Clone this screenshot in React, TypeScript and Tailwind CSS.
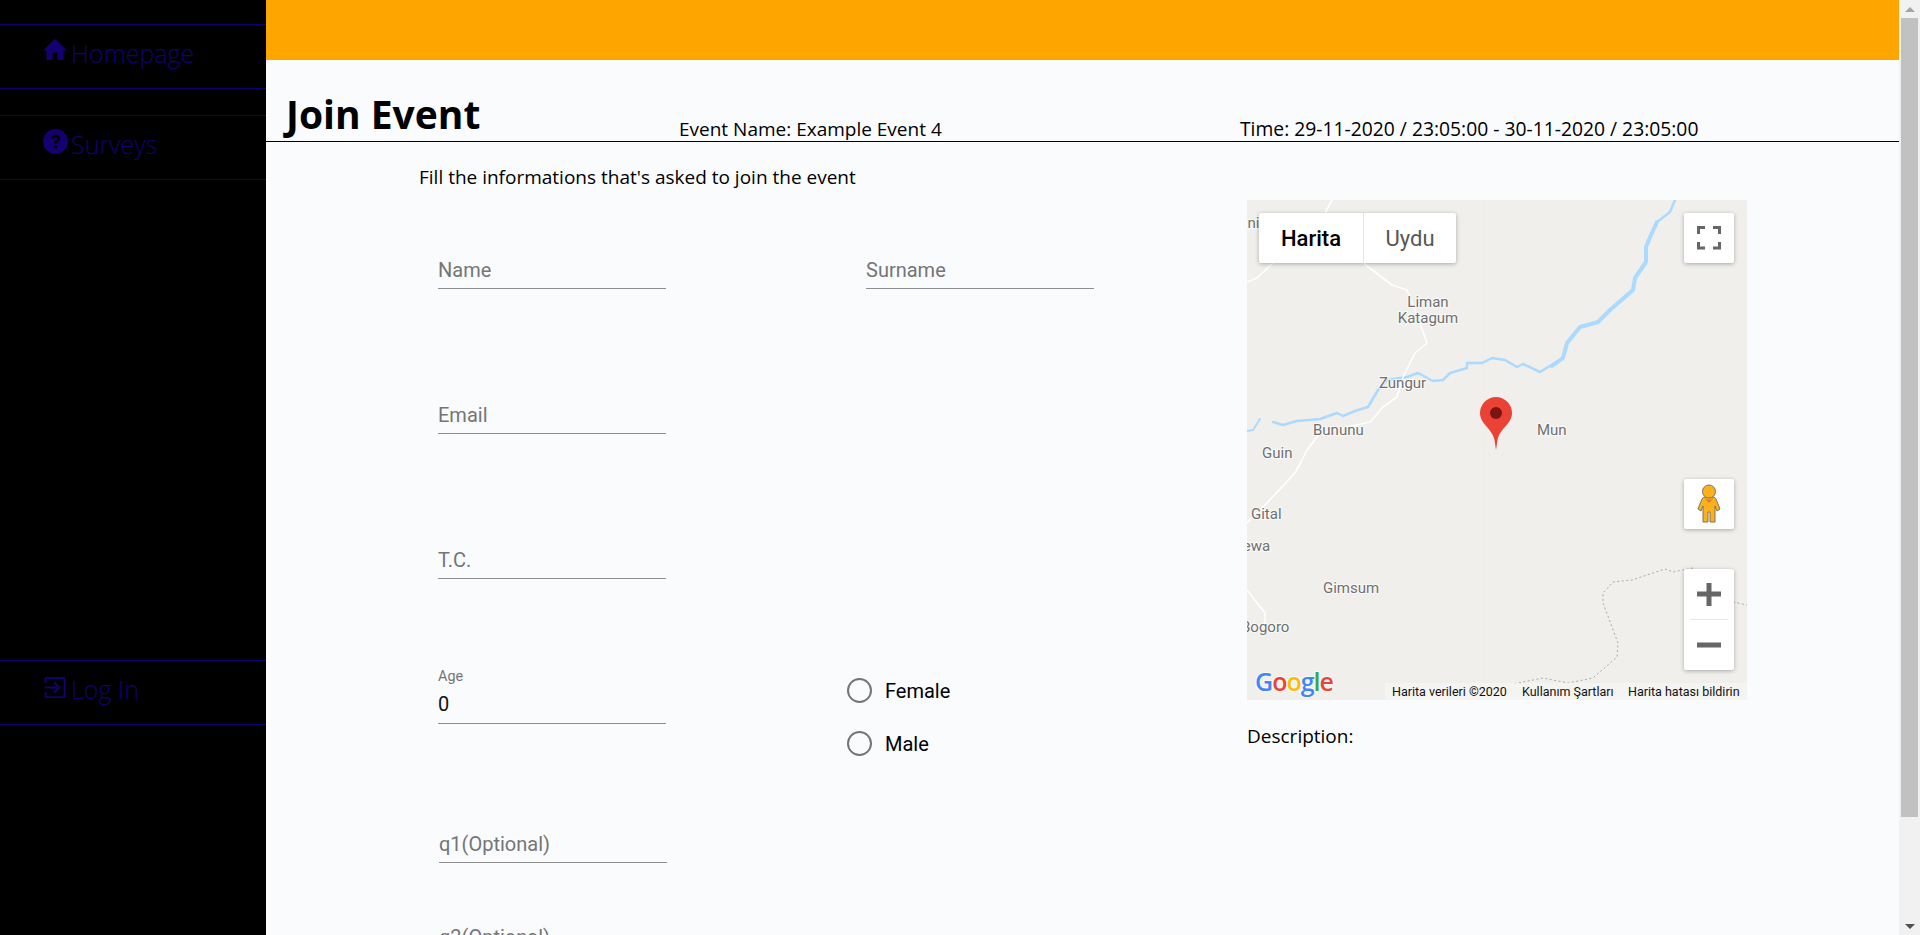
const uiFont = "font-['Open_Sans','Noto_Sans',sans-serif]";

function HomeIcon() {
  return (
    <svg width="24" height="21" viewBox="0 0 24 21" className="mt-[3px]">
      <path d="M12 0 L24 11.500 L20.500 11.500 L20.500 21 L14.500 21 L14.500 13.500 L9.500 13.500 L9.500 21 L3.500 21 L3.500 11.500 L0 11.500 Z" fill="#140070" />
    </svg>
  );
}

function QuestionIcon() {
  return (
    <svg width="25" height="25" viewBox="0 0 26 26" className="mt-[2px]">
      <circle cx="13" cy="13" r="13" fill="#140070" />
      <path d="M8.6 10.2 C8.8 7.4 10.6 5.8 13.3 5.8 C16 5.8 17.8 7.4 17.8 9.7 C17.8 12.6 14.6 12.8 14.6 15.2 L11.6 15.2 C11.6 11.6 14.6 11.4 14.6 9.8 C14.6 9 14.1 8.5 13.2 8.5 C12.2 8.5 11.7 9.2 11.6 10.2 Z" fill="#000" />
      <rect x="11.5" y="16.8" width="3.1" height="3.1" fill="#000" />
    </svg>
  );
}

function LogInIcon() {
  return (
    <svg width="24" height="23" viewBox="0 0 24 24" fill="none" stroke="#140070" strokeWidth="2" className="mt-[4px]">
      <path d="M2 7 V3 Q2 2 3 2 H21 Q22 2 22 3 V21 Q22 22 21 22 H3 Q2 22 2 21 V17" />
      <path d="M1 12 H16 M11 6.5 L16.5 12 L11 17.5" />
    </svg>
  );
}

function NavItem({ icon, label, className }: { icon: React.ReactNode; label: string; className?: string }) {
  return (
    <div className={`h-[65px] border-y border-[#140070] flex items-start pl-[43px] pt-[11px] text-[25px] leading-[34px] font-light text-[#140070] ${className ?? ""}`}>
      <div className="w-[28px] shrink-0">{icon}</div>
      <span>{label}</span>
    </div>
  );
}

function Field({ label, shift }: { label: string; shift?: boolean }) {
  return (
    <div className={`w-[228px] border-b border-[#8f8f8f] pb-[6px] pt-[4px] font-['Roboto',sans-serif] text-[20px] leading-[24px] text-[#757575] ${shift ? "ml-px" : ""}`}>
      {label}
    </div>
  );
}

function Radio({ label }: { label: string }) {
  return (
    <div className="flex items-center gap-[13px] h-[25px] font-['Roboto',sans-serif] text-[20px] text-black">
      <span className="w-[25px] h-[25px] rounded-full border-2 border-[#757575]" />
      {label}
    </div>
  );
}

function MapCanvas() {
  const river =
    "M428 0 L423 12 L410 22 L404 35 L399 47 L399 62 L388 78 L386 90 L363 110 L351 122 L333 127 L320 143 L316 158 L293 172 L276 164 L270 167 L258 160 L245 158 L235 163 L220 163 L220 168 L203 173 L196 180 L186 181 L171 173 L160 177 L140 180 L131 190 L121 207 L108 211 L96 216 L90 213 L73 219 L50 221 L36 225 L26 222";
  const riverWide = "M410 22 L404 35 L399 47 L399 62 L388 78 L386 90 L363 110 L351 122 L333 127 L320 143 L316 158 L305 166";
  const road =
    "M116 63 L145 85 L160 90 L173 123 L180 143 L168 153 L156 177 L150 197 L136 207 L123 222 L73 233 L60 250 L55 260 L48 273 L20 303 L0 323";
  const border =
    "M446 368 L426 372 L418 369 L385 380 L366 382 L356 393 L356 403 L371 443 L370 457 L346 478 L321 483 L296 478 L266 484";
  const labelClass = "font-['Roboto',sans-serif] text-[15px] fill-[#6f6f6f] [paint-order:stroke] stroke-white/70 [stroke-width:2px]";
  return (
    <svg width="500" height="500" viewBox="0 0 500 500" className="absolute inset-0">
      <rect width="500" height="500" fill="#f0efeb" />
      <path d="M237 0 V500 M0 240 H500" stroke="#eeede8" />
      <g fill="none" stroke="#aadaff" strokeLinejoin="round" strokeLinecap="round">
        <path d={river} strokeWidth="2.5" />
        <path d={riverWide} strokeWidth="4" />
        <path d="M13 219 L6 230 L0 231" strokeWidth="2" />
      </g>
      <g fill="none" stroke="#fff" strokeWidth="1.6" strokeLinejoin="round">
        <path d={road} />
        <path d="M85 0 L78 13 M26 63 L10 78 L0 82 M0 390 L18 413 L18 425" />
      </g>
      <path d={border} fill="none" stroke="#a9a9a5" strokeWidth="1" strokeDasharray="2 2.5" />
      <path d="M486 402 L500 405" fill="none" stroke="#a9a9a5" strokeWidth="1" strokeDasharray="2 2.5" />
      <text x="-16" y="28" className={labelClass}>Jani</text>
      <text x="181" y="107" textAnchor="middle" className={labelClass}>Liman</text>
      <text x="181" y="123" textAnchor="middle" className={labelClass}>Katagum</text>
      <text x="132" y="188" className={labelClass}>Zungur</text>
      <text x="66" y="235" className={labelClass}>Bununu</text>
      <text x="290" y="235" className={labelClass}>Mun</text>
      <text x="15" y="258" className={labelClass}>Guin</text>
      <text x="4" y="319" className={labelClass}>Gital</text>
      <text x="-13" y="351" className={labelClass}>Zewa</text>
      <text x="76" y="393" className={labelClass}>Gimsum</text>
      <text x="-6" y="432" className={labelClass}>Bogoro</text>
      {/* marker */}
      <path d="M249 250 L247.500 240 C245 228 233 224 233 213 A16 16 0 0 1 265 213 C265 224 253 228 250.500 240 Z" fill="#ea4335" />
      <circle cx="249" cy="213" r="6" fill="#7d1410" />
      {/* google */}
      <text x="8" y="491" className="font-['Open_Sans',sans-serif] text-[25px] font-semibold tracking-[-1px] [paint-order:stroke] stroke-white/70 [stroke-width:2px]">
        <tspan fill="#4285f4">G</tspan>
        <tspan fill="#ea4335">o</tspan>
        <tspan fill="#fbbc05">o</tspan>
        <tspan fill="#4285f4">g</tspan>
        <tspan fill="#34a853">l</tspan>
        <tspan fill="#ea4335">e</tspan>
      </text>
    </svg>
  );
}

function Pegman() {
  return (
    <svg width="24" height="40" viewBox="0 0 24 40">
      <path d="M8 13 L16 13 Q18 13 19 15 L23 25 L20 27 L18 22 L18 38 L13 38 L13 28 L11 28 L11 38 L6 38 L6 22 L4 27 L1 25 L5 15 Q6 13 8 13 Z" fill="#fbb11b" stroke="#7d7464" strokeWidth="1" />
      <circle cx="12" cy="7.5" r="6.5" fill="#fbb11b" stroke="#7d7464" strokeWidth="1" />
      <path d="M7 13.5 L12 19 L17 13.5 L14 15.5 L10 15.5 Z" fill="#e0782a" />
    </svg>
  );
}

function GoogleMap() {
  const ctrl = "absolute bg-white rounded-[2px] shadow-[0_1px_4px_rgba(0,0,0,0.3)]";
  return (
    <div className="relative w-[500px] h-[500px] overflow-hidden">
      <MapCanvas />
      <div className={`${ctrl} left-[12px] top-[13px] w-[197px] h-[50px] flex font-['Roboto',sans-serif] text-[22px]`}>
        <div className="w-[104px] flex items-center justify-center font-medium text-black">Harita</div>
        <div className="flex-1 flex items-center justify-center border-l border-[#e6e6e6] text-[#565656]">Uydu</div>
      </div>
      <div className={`${ctrl} left-[437px] top-[13px] w-[50px] h-[50px] flex items-center justify-center`}>
        <svg width="24" height="24" viewBox="0 0 24 24" fill="none" stroke="#666" strokeWidth="3">
          <path d="M1.5 8 V1.5 H8 M16 1.5 H22.500 V8 M1.5 16 V22 H8 M16 22 H22.500 V16" />
        </svg>
      </div>
      <div className={`${ctrl} left-[437px] top-[279px] w-[50px] h-[50px] flex items-center justify-center`}>
        <Pegman />
      </div>
      <div className={`${ctrl} left-[437px] top-[369px] w-[50px] h-[101px] flex flex-col items-center`}>
        <div className="h-[50px] flex items-center justify-center">
          <svg width="24" height="24" viewBox="0 0 24 24" fill="#666"><path d="M9.500 1 H14.500 V9.500 H24 V14.500 H14.500 V24 H9.500 V14.500 H0 V9.500 H9.500 Z" /></svg>
        </div>
        <div className="w-[38px] h-px bg-[#e6e6e6]" />
        <div className="h-[50px] flex items-center justify-center">
          <svg width="24" height="24" viewBox="0 0 24 24" fill="#666"><rect x="0" y="9.500" width="24" height="5" /></svg>
        </div>
      </div>
      <div className="absolute right-0 bottom-0 h-[17px] w-[362px] flex font-['Roboto',sans-serif] text-[12.5px] leading-[17px] text-[#111] bg-[#f5f5f5]/80">
        <span className="pl-[7px] w-[129px] whitespace-nowrap">Harita verileri ©2020</span>
        <span className="pl-[8px] w-[107px] whitespace-nowrap">Kullanım Şartları</span>
        <span className="pl-[7px] whitespace-nowrap">Harita hatası bildirin</span>
      </div>
    </div>
  );
}

export default function App() {
  return (
    <div className={`flex h-[935px] overflow-hidden bg-[#f9fbfd] ${uiFont} text-black`}>
      {/* sidebar */}
      <aside className="w-[266px] shrink-0 bg-black pt-[24px] flex flex-col">
        <NavItem icon={<HomeIcon />} label="Homepage" />
        <NavItem icon={<QuestionIcon />} label="Surveys" className="mt-[26px]" />
        <NavItem icon={<LogInIcon />} label="Log In" className="mt-[480px]" />
      </aside>

      {/* main */}
      <main className="flex-1 min-w-0 overflow-hidden">
        <div className="h-[60px] bg-[#ffa500]" />
        <div className="h-[82px] border-b border-black flex items-end">
          <h1 className="w-[413px] pl-[20px] text-[39px] leading-[56px] font-bold -mb-px">Join Event</h1>
          <div className="w-[561px] text-[19px] leading-[24px]">Event Name: Example Event 4</div>
          <div className="text-[19.300px] leading-[24px]">Time: 29-11-2020 / 23:05:00 - 30-11-2020 / 23:05:00</div>
        </div>
        <div className="flex">
          <div className="w-[981px] pl-[153px] pt-[23px]">
            <p className="text-[19px] leading-[24px]">Fill the informations that's asked to join the event</p>
            <div className="pl-[19px]">
              <div className="h-[100px] flex items-end">
                <Field label="Name" />
                <div className="ml-[200px]"><Field label="Surname" /></div>
              </div>
              <div className="h-[145px] flex items-end"><Field label="Email" /></div>
              <div className="h-[145px] flex items-end"><Field label="T.C." /></div>
              <div className="h-[145px] flex items-end">
                <div className="w-[228px] border-b border-[#8f8f8f] pb-[7px] font-['Roboto',sans-serif]">
                  <div className="text-[14.400px] leading-[18px] text-[#757575]">Age</div>
                  <div className="text-[20px] leading-[24px] mt-[6px] text-[#111]">0</div>
                </div>
                <div className="ml-[181px] flex flex-col gap-[28px] mb-[-32px]">
                  <Radio label="Female" />
                  <Radio label="Male" />
                </div>
              </div>
              <div className="h-[139px] flex items-end"><Field label="q1(Optional)" shift /></div>
              <div className="h-[93px] flex items-end"><Field label="q2(Optional)" shift /></div>
            </div>
          </div>
          <div className="pt-[58px]">
            <GoogleMap />
            <p className="mt-[24px] text-[19px] leading-[24px]">Description:</p>
          </div>
        </div>
      </main>

      {/* scrollbar */}
      <div className="w-[21px] shrink-0 bg-[#f1f1f1] flex flex-col items-center">
        <div className="h-[18px] flex items-center justify-center">
          <div className="w-0 h-0 border-x-[5px] border-x-transparent border-b-[5px] border-b-[#a3a3a3]" />
        </div>
        <div className="w-[17px] h-[799px] bg-[#c1c1c1]" />
        <div className="mt-auto h-[18px] flex items-center justify-center">
          <div className="w-0 h-0 border-x-[5px] border-x-transparent border-t-[5px] border-t-[#505050]" />
        </div>
      </div>
    </div>
  );
}
